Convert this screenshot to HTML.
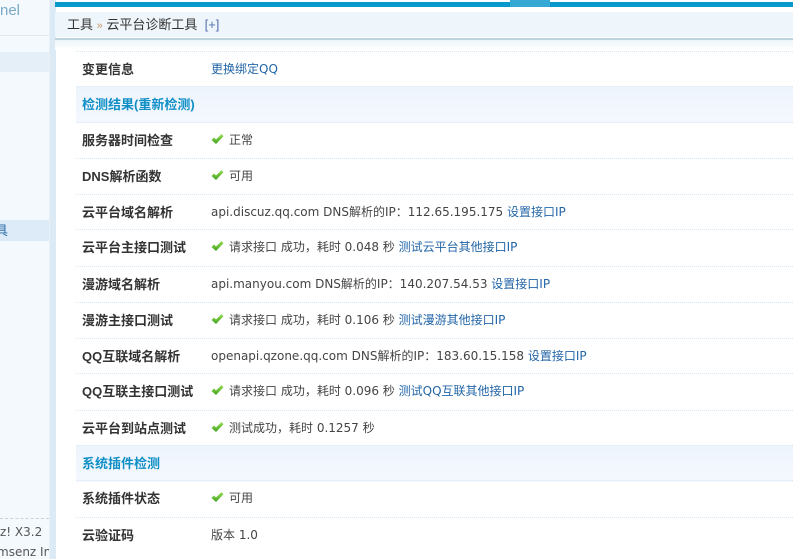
<!DOCTYPE html><html><head><meta charset="utf-8"><style>
body{margin:0;width:793px;height:559px;overflow:hidden;background:#fff;font-family:"Liberation Sans","Noto Sans CJK SC",sans-serif;font-size:12px;color:#333;position:relative}
.side{position:absolute;left:0;top:0;width:49px;height:559px;background:#f4f9fd;overflow:hidden}
.strip{position:absolute;left:49px;top:0;width:6px;height:559px;background:#dceaf5;border-left:1px solid #e8f1f8}
.bar{position:absolute;left:55px;top:2px;right:0;height:5px;background:#0a99cb}
.tab{position:absolute;left:510px;top:0;width:40px;height:7px;background:#35a9d4}
.hd{position:absolute;left:55px;top:12px;right:0;height:25px;background:#eef6fb;font-size:13px;line-height:25px;padding-left:12px;color:#333}
.hline{position:absolute;left:55px;top:38px;right:0;height:2px;background:#bcd2de}
.hgrad{position:absolute;left:55px;top:40px;right:0;height:10px;background:linear-gradient(#eef5fa,#fff)}
.row{position:absolute;left:76px;right:0;height:36px;border-top:1px dotted #d6e6f3;line-height:35px}
.row .l{position:absolute;left:6px;font-weight:bold;font-size:13px;color:#333}
.row .v{position:absolute;left:135px;font-size:12px;color:#444;font-family:"DejaVu Sans","Noto Sans CJK SC",sans-serif;white-space:nowrap}
.sec{background:linear-gradient(#eef4fc,#f4f8fe)}
.sec .l{color:#0f8fc6}
a{color:#2366a8;text-decoration:none}
.ck{display:inline-block;width:13px;height:11px;vertical-align:-1px;margin-right:5px}
</style></head><body>
<div class="side">
<div style="position:absolute;left:0;top:0;color:#7aa9c4;font-size:15px;line-height:22px">nel</div>
<div style="position:absolute;left:0;top:35px;width:49px;height:1px;background:#dfeaf2"></div>
<div style="position:absolute;left:0;top:52px;width:49px;height:20px;background:#e4eff8"></div>
<div style="position:absolute;left:0;top:220px;width:49px;height:21px;background:#dcebf7;color:#2a6da8;font-size:13px;line-height:21px;text-indent:-5px">具</div>
<div style="position:absolute;left:0;top:518px;width:49px;border-top:1px dashed #c8d4dc"></div>
<div style="position:absolute;left:0;top:522px;font-size:12px;color:#555;line-height:20px;white-space:nowrap;font-family:'DejaVu Sans',sans-serif">z! X3.2<br><span style="margin-left:-3px">msenz Inc.</span></div>
</div>
<div class="strip"></div>
<div class="bar"></div><div class="tab"></div>
<div class="hd">工具 <span style="color:#c96;font-size:11px">»</span> 云平台诊断工具 &nbsp;<span style="color:#5a6fb0">[+]</span></div>
<div class="hline"></div><div class="hgrad"></div>
<svg width="0" height="0" style="position:absolute"><defs><linearGradient id="g" x1="0" y1="0" x2="0" y2="1"><stop offset="0" stop-color="#9ae05a"/><stop offset="1" stop-color="#3fa21a"/></linearGradient></defs></svg>
<div class="row" style="top:51px"><span class="l">变更信息</span><span class="v"><a>更换绑定QQ</a></span></div>
<div class="row sec" style="top:86px"><span class="l">检测结果(重新检测)</span></div>
<div class="row" style="top:122px"><span class="l">服务器时间检查</span><span class="v"><svg class="ck" viewBox="0 0 13 11"><path d="M0.5 6 L3 3.5 L5 5.5 L10.5 0 L12.5 2.2 L5 10 Z" fill="url(#g)"/></svg>正常</span></div>
<div class="row" style="top:158px"><span class="l">DNS解析函数</span><span class="v"><svg class="ck" viewBox="0 0 13 11"><path d="M0.5 6 L3 3.5 L5 5.5 L10.5 0 L12.5 2.2 L5 10 Z" fill="url(#g)"/></svg>可用</span></div>
<div class="row" style="top:194px"><span class="l">云平台域名解析</span><span class="v">api.discuz.qq.com DNS解析的IP：112.65.195.175 <a>设置接口IP</a></span></div>
<div class="row" style="top:229px"><span class="l">云平台主接口测试</span><span class="v"><svg class="ck" viewBox="0 0 13 11"><path d="M0.5 6 L3 3.5 L5 5.5 L10.5 0 L12.5 2.2 L5 10 Z" fill="url(#g)"/></svg>请求接口 成功，耗时 0.048 秒 <a>测试云平台其他接口IP</a></span></div>
<div class="row" style="top:266px"><span class="l">漫游域名解析</span><span class="v">api.manyou.com DNS解析的IP：140.207.54.53 <a>设置接口IP</a></span></div>
<div class="row" style="top:302px"><span class="l">漫游主接口测试</span><span class="v"><svg class="ck" viewBox="0 0 13 11"><path d="M0.5 6 L3 3.5 L5 5.5 L10.5 0 L12.5 2.2 L5 10 Z" fill="url(#g)"/></svg>请求接口 成功，耗时 0.106 秒 <a>测试漫游其他接口IP</a></span></div>
<div class="row" style="top:338px"><span class="l">QQ互联域名解析</span><span class="v">openapi.qzone.qq.com DNS解析的IP：183.60.15.158 <a>设置接口IP</a></span></div>
<div class="row" style="top:373px"><span class="l">QQ互联主接口测试</span><span class="v"><svg class="ck" viewBox="0 0 13 11"><path d="M0.5 6 L3 3.5 L5 5.5 L10.5 0 L12.5 2.2 L5 10 Z" fill="url(#g)"/></svg>请求接口 成功，耗时 0.096 秒 <a>测试QQ互联其他接口IP</a></span></div>
<div class="row" style="top:410px"><span class="l">云平台到站点测试</span><span class="v"><svg class="ck" viewBox="0 0 13 11"><path d="M0.5 6 L3 3.5 L5 5.5 L10.5 0 L12.5 2.2 L5 10 Z" fill="url(#g)"/></svg>测试成功，耗时 0.1257 秒</span></div>
<div class="row sec" style="top:445px"><span class="l">系统插件检测</span></div>
<div class="row" style="top:480px"><span class="l">系统插件状态</span><span class="v"><svg class="ck" viewBox="0 0 13 11"><path d="M0.5 6 L3 3.5 L5 5.5 L10.5 0 L12.5 2.2 L5 10 Z" fill="url(#g)"/></svg>可用</span></div>
<div class="row" style="top:517px"><span class="l">云验证码</span><span class="v">版本 1.0</span></div>
</body></html>
